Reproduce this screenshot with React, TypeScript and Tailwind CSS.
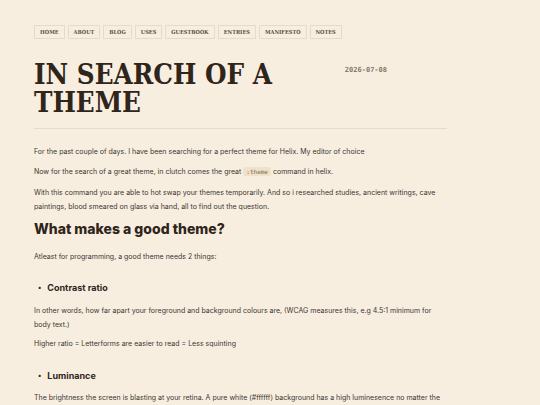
const nav = ["Home", "About", "Blog", "Uses", "Guestbook", "Entries", "Manifesto", "Notes"];

const serif = "font-['DejaVu_Serif_Condensed','DejaVu_Serif',serif] [font-stretch:condensed]";
const sans = "font-['Inter','Noto_Sans',sans-serif]";
const mono = "font-['DejaVu_Sans_Mono',monospace]";

function Bullet({ children }: { children: string }) {
  return (
    <div className="flex items-center gap-[6px] pl-[4px] text-[9px] font-bold leading-[14px] text-[#2f251b]">
      <span className="text-[7px]">•</span>
      {children}
    </div>
  );
}

export default function App() {
  return (
    <div className={`min-h-screen bg-[#f8eee0] text-[#3a3633] ${sans}`}>
      <div className="ml-[34px] w-[413px] pt-[25px]">
        <nav className="flex gap-[3px]">
          {nav.map((n) => (
            <a
              key={n}
              className={`${serif} flex h-[14px] items-center border border-[#e7dac7] px-[5px] text-[5.6px] font-bold uppercase text-[#5c5045]`}
            >
              {n}
            </a>
          ))}
        </nav>

        <header className="mt-[21px] flex justify-between pr-[60px]">
          <h1 className={`${serif} text-[27.5px] font-bold leading-[28px] text-[#2f251b]`}>
            IN SEARCH OF A<br />THEME
          </h1>
          <span className={`${mono} mt-[5px] text-[7px] font-bold text-[#857a6e]`}>2026-07-08</span>
        </header>
        <hr className="mt-[12px] border-[#e8d9c8]" />

        <article className="mt-[16px] text-[7px] leading-[14px]">
          <p>For the past couple of days. I have been searching for a perfect theme for Helix. My editor of choice</p>
          <p className="mt-[6px]">
            Now for the search of a great theme, in clutch comes the great{" "}
            <code className={`${mono} rounded-[2px] bg-[#efe2c9] px-[3px] py-[1px] text-[6px] text-[#7a6a55]`}>:theme</code>{" "}
            command in helix.
          </p>
          <p className="mt-[7px]">
            With this command you are able to hot swap your themes temporarily. And so i researched studies, ancient writings, cave
            paintings, blood smeared on glass via hand, all to find out the question.
          </p>

          <h2 className="mt-[5px] text-[14px] font-extrabold leading-[20px] text-[#2f251b]">What makes a good theme?</h2>
          <p className="mt-[11px]">Atleast for programming, a good theme needs 2 things:</p>

          <div className="mt-[17px]">
            <Bullet>Contrast ratio</Bullet>
          </div>
          <p className="mt-[9px]">
            In other words, how far apart your foreground and background colours are, (WCAG measures this, e.g 4.5:1 minimum for
            body text.)
          </p>
          <p className="mt-[5px]">Higher ratio = Letterforms are easier to read = Less squinting</p>

          <div className="mt-[18px]">
            <Bullet>Luminance</Bullet>
          </div>
          <p className="mt-[8px]">
            The brightness the screen is blasting at your retina. A pure white (#ffffff) background has a high luminesence no matter the
            colours you use.
          </p>
        </article>
      </div>
    </div>
  );
}
